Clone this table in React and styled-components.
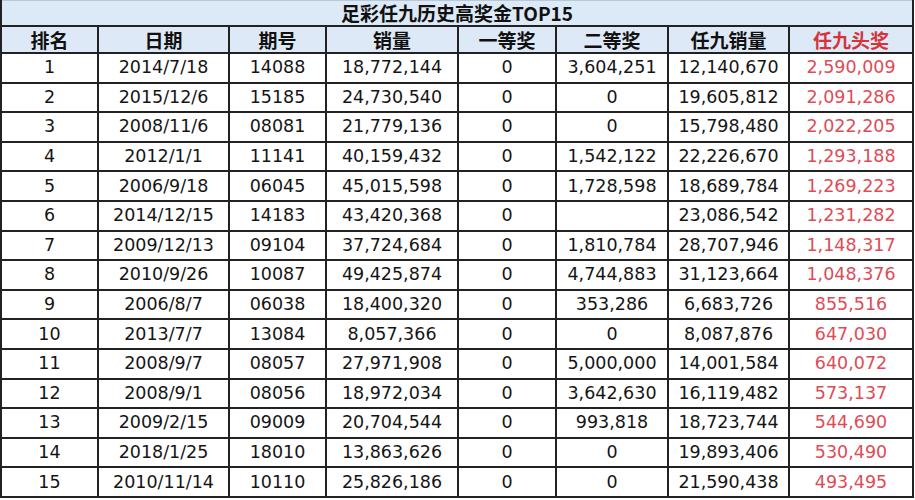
import React from 'react'
import styled, { createGlobalStyle } from 'styled-components'

const GlobalStyle = createGlobalStyle`
    html, body {
        margin: 0;
        padding: 0;
        background: #ffffff;
    }
`

const columns = [
    { title: '排名', width: 97 },
    { title: '日期', width: 131 },
    { title: '期号', width: 97 },
    { title: '销量', width: 132 },
    { title: '一等奖', width: 98 },
    { title: '二等奖', width: 112 },
    { title: '任九销量', width: 121 },
    { title: '任九头奖', width: 124, red: true },
]

const rows = [
    ['1', '2014/7/18', '14088', '18,772,144', '0', '3,604,251', '12,140,670', '2,590,009'],
    ['2', '2015/12/6', '15185', '24,730,540', '0', '0', '19,605,812', '2,091,286'],
    ['3', '2008/11/6', '08081', '21,779,136', '0', '0', '15,798,480', '2,022,205'],
    ['4', '2012/1/1', '11141', '40,159,432', '0', '1,542,122', '22,226,670', '1,293,188'],
    ['5', '2006/9/18', '06045', '45,015,598', '0', '1,728,598', '18,689,784', '1,269,223'],
    ['6', '2014/12/15', '14183', '43,420,368', '0', '', '23,086,542', '1,231,282'],
    ['7', '2009/12/13', '09104', '37,724,684', '0', '1,810,784', '28,707,946', '1,148,317'],
    ['8', '2010/9/26', '10087', '49,425,874', '0', '4,744,883', '31,123,664', '1,048,376'],
    ['9', '2006/8/7', '06038', '18,400,320', '0', '353,286', '6,683,726', '855,516'],
    ['10', '2013/7/7', '13084', '8,057,366', '0', '0', '8,087,876', '647,030'],
    ['11', '2008/9/7', '08057', '27,971,908', '0', '5,000,000', '14,001,584', '640,072'],
    ['12', '2008/9/1', '08056', '18,972,034', '0', '3,642,630', '16,119,482', '573,137'],
    ['13', '2009/2/15', '09009', '20,704,544', '0', '993,818', '18,723,744', '544,690'],
    ['14', '2018/1/25', '18010', '13,863,626', '0', '0', '19,893,406', '530,490'],
    ['15', '2010/11/14', '10110', '25,826,186', '0', '0', '21,590,438', '493,495'],
]

const Table = () => {
    return (
        <Wrap>
            <GlobalStyle />
            <Grid>
                <colgroup>
                    {columns.map((c) => <col key={c.title} style={{ width: c.width }} />)}
                </colgroup>
                <thead>
                    <tr>
                        <Title colSpan={columns.length}>足彩任九历史高奖金TOP15</Title>
                    </tr>
                    <tr>
                        {columns.map((c) => <Head key={c.title} $red={c.red}>{c.title}</Head>)}
                    </tr>
                </thead>
                <tbody>
                    {rows.map((r) => (
                        <Row key={r[0]}>
                            {r.map((v, i) => <Cell key={i} $red={columns[i].red}>{v}</Cell>)}
                        </Row>
                    ))}
                </tbody>
            </Grid>
        </Wrap>
    )
}

const Wrap = styled.div`
    width: 915px;
    height: 500px;
    overflow: hidden;
`

const Grid = styled.table`
    width: 913px;
    table-layout: fixed;
    border-collapse: collapse;
    margin-left: 0;
`

const Title = styled.th`
    height: 24px;
    padding: 0;
    background: #dce9f6;
    border: 2px solid #222;
    border-top: 1px solid #b9c7d6;
    font-family: "Noto Sans CJK SC", "Noto Sans", sans-serif;
    font-size: 19px;
    font-weight: 700;
    line-height: 24px;
    color: #111;
    text-align: center;
`

const Head = styled.th`
    height: 25px;
    padding: 0;
    background: #dde9f6;
    border: 2px solid #222;
    font-family: "Noto Sans CJK SC", sans-serif;
    font-size: 19px;
    font-weight: 700;
    line-height: 25px;
    color: ${(p) => (p.$red ? '#d6343a' : '#111')};
    text-align: center;
`

const Row = styled.tr`
    height: 29.6px;
`

const Cell = styled.td`
    padding: 0;
    border: 2px solid #222;
    font-family: "DejaVu Sans", "Noto Sans CJK SC", sans-serif;
    font-size: 17.5px;
    line-height: 25px;
    color: ${(p) => (p.$red ? '#de4c55' : '#151515')};
    text-align: center;
    white-space: nowrap;
`

export default Table
